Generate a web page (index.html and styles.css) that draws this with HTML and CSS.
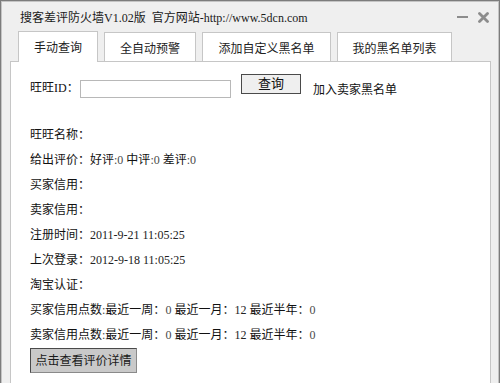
FILE: index.html
```html
<!DOCTYPE html>
<html lang="zh-CN">
<head>
<meta charset="utf-8">
<title>搜客差评防火墙</title>
<link rel="stylesheet" href="styles.css">
</head>
<body>
<div class="window">
  <div class="titlebar">
    <div class="title">搜客差评防火墙V1.02版&nbsp;&nbsp;官方网站-http://www.5dcn.com</div>
    <div class="controls">
      <svg class="ctl-min" width="11" height="4" viewBox="0 0 11 4"><rect x="0" y="1" width="11" height="2" fill="#8c8c8c"/></svg>
      <svg class="ctl-close" width="11" height="11" viewBox="0 0 11 11"><path d="M1.5 1.5 L9.5 9.5 M9.5 1.5 L1.5 9.5" stroke="#8c8c8c" stroke-width="2.8" stroke-linecap="round"/></svg>
    </div>
  </div>
  <div class="body">
    <div class="tabs">
      <div class="tab active w1">手动查询</div>
      <div class="tab w2">全自动预警</div>
      <div class="tab w3">添加自定义黑名单</div>
      <div class="tab w4">我的黑名单列表</div>
    </div>
    <div class="panel">
      <div class="idrow">
        <span class="idlabel">旺旺ID：</span>
        <span class="input"></span>
        <span class="btn-query">查询</span>
        <span class="addlink">加入卖家黑名单</span>
      </div>
      <div class="rows">
        <div class="row">旺旺名称：</div>
        <div class="row">给出评价：好评<span class="v">:0</span> 中评<span class="v">:0</span> 差评<span class="v">:0</span></div>
        <div class="row">买家信用：</div>
        <div class="row">卖家信用：</div>
        <div class="row">注册时间：<span class="d">2011-9-21 11:05:25</span></div>
        <div class="row">上次登录：<span class="d">2012-9-18 11:05:25</span></div>
        <div class="row">淘宝认证：</div>
        <div class="row">买家信用点数<span class="v">:</span>最近一周：<span class="v">0</span> 最近一月：<span class="d">12</span> 最近半年：<span class="v">0</span></div>
        <div class="row">卖家信用点数<span class="v">:</span>最近一周：<span class="v">0</span> 最近一月：<span class="d">12</span> 最近半年：<span class="v">0</span></div>
      </div>
      <div class="btn-detail">点击查看评价详情</div>
    </div>
  </div>
</div>
</body>
</html>
```

FILE: styles.css
```css
html, body {
  margin: 0;
  padding: 0;
}
body {
  width: 500px;
  height: 383px;
  overflow: hidden;
  font-family: "Liberation Serif", "Noto Sans CJK SC", serif;
  font-size: 12px;
  color: #111;
}
.window {
  box-sizing: border-box;
  width: 500px;
  height: 383px;
  display: flex;
  flex-direction: column;
  background: #efefef;
  border: 1px solid #7c7c7c;
  border-bottom: none;
  box-shadow: inset 1px 1px 0 #c4c4c4, inset -1px 0 0 #c4c4c4;
}
.titlebar {
  height: 30px;
  flex: none;
  display: flex;
  align-items: center;
  padding-left: 19px;
  padding-right: 10px;
}
.title {
  flex: 1;
  font-size: 12px;
  color: #1a1a1a;
  padding-top: 2px;
}
.controls {
  display: flex;
  align-items: center;
  gap: 10px;
  padding-top: 2px;
}
.body {
  flex: 1;
  min-height: 0;
  display: flex;
  flex-direction: column;
  padding: 0 8px 0 9px;
}
.tabs {
  display: flex;
  flex: none;
  align-items: flex-end;
  gap: 6px;
  padding-left: 8px;
  height: 30px;
  position: relative;
  z-index: 1;
}
.tab {
  box-sizing: border-box;
  height: 29px;
  background: #fff;
  border: 1px solid #c6c6c6;
  border-bottom: none;
  display: flex;
  align-items: center;
  justify-content: center;
  font-family: "Noto Sans CJK SC", sans-serif;
  color: #222;
}
.tab.active {
  height: 31px;
  margin-bottom: -1px;
  padding-bottom: 2px;
}
.w1 { width: 80px; }
.w2 { width: 92px; }
.w3 { width: 129px; }
.w4 { width: 115px; }
.panel {
  box-sizing: border-box;
  flex: 1;
  min-height: 0;
  overflow: hidden;
  background: #fff;
  border: 1px solid #c6c6c6;
  border-bottom: none;
  padding: 12px 0 0 19px;
}
.idrow {
  display: flex;
  align-items: flex-start;
  height: 24px;
}
.idlabel {
  width: 50px;
  line-height: 17px;
  margin-top: 6px;
  white-space: nowrap;
}
.input {
  box-sizing: border-box;
  width: 151px;
  height: 18px;
  margin-top: 6px;
  border: 1px solid #b8b8b8;
  background: #fff;
}
.btn-query {
  box-sizing: border-box;
  width: 60px;
  height: 20px;
  margin-left: 10px;
  border: 1px solid #4a4a4a;
  background: #efefef;
  text-align: center;
  line-height: 16px;
  font-size: 13px;
  font-family: "Noto Sans CJK SC", sans-serif;
}
.addlink {
  margin-left: 12px;
  margin-top: 8px;
  line-height: 17px;
  font-size: 12px;
}
.rows {
  margin-top: 25px;
}
.row {
  height: 25px;
  line-height: 25px;
  white-space: nowrap;
}
.v {
  color: #4a4a4a;
}
.d {
  color: #222;
}
.btn-detail {
  box-sizing: border-box;
  width: 107px;
  height: 25px;
  margin-top: 0;
  border: 1px solid #4a4a4a;
  border-right-color: #8a8a8a;
  border-bottom-color: #8a8a8a;
  background: #c9c9c9;
  text-align: center;
  line-height: 22px;
  font-size: 12px;
  font-family: "Noto Sans CJK SC", sans-serif;
  color: #1a1a1a;
}
```
